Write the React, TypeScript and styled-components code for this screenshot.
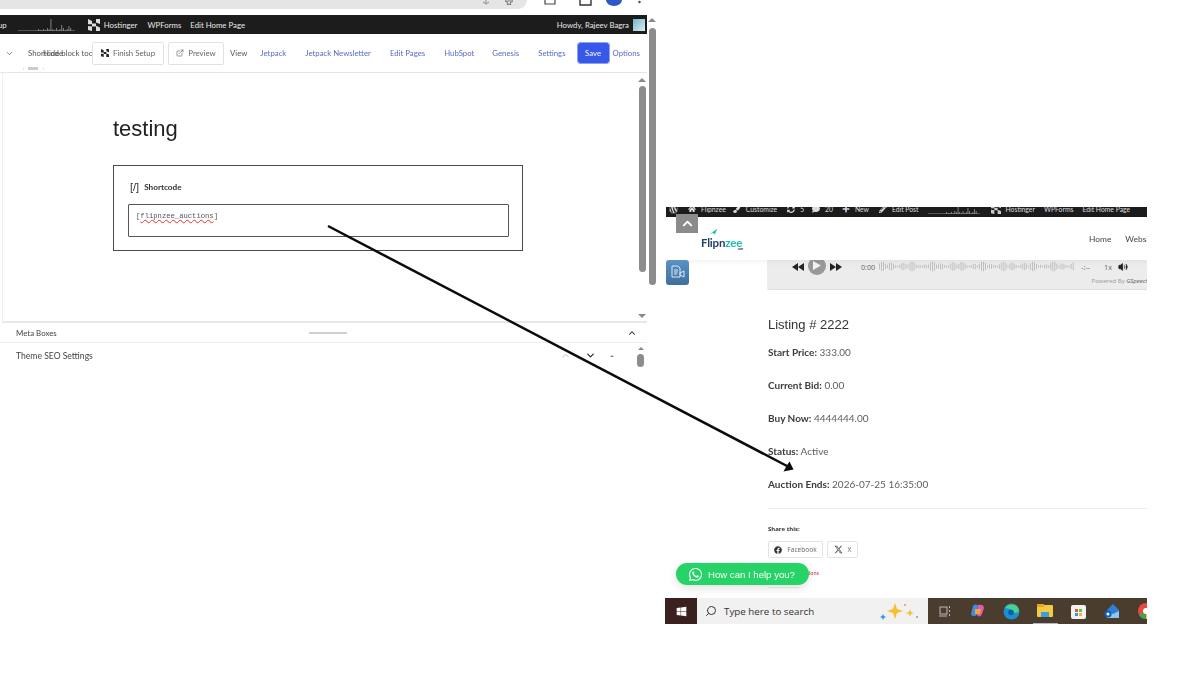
import React from "react";
import styled, { createGlobalStyle } from "styled-components";
import {
  FaWhatsapp,
  FaFacebook,
  FaWindows,
  FaWordpress,
  FaHome,
  FaPaintBrush,
  FaSyncAlt,
  FaComment,
  FaPlus,
  FaPencilAlt,
} from "react-icons/fa";
import { FaXTwitter } from "react-icons/fa6";
import { Search, ChevronDown, ChevronUp, ExternalLink, Volume2 } from "lucide-react";

const Global = createGlobalStyle`
  html, body { margin: 0; padding: 0; background: #fff; }
  body { font-family: "Open Sans", "Liberation Sans", sans-serif; }
  * { box-sizing: border-box; }
`;

const Canvas = styled.div`
  position: relative;
  width: 1200px;
  height: 675px;
  overflow: hidden;
  background: #fff;
`;

const EditorWindow = styled.div`
  position: absolute;
  left: 0;
  top: 0;
  width: 657px;
  height: 370px;
  overflow: hidden;
  display: grid;
  grid-template-columns: 647px 10px;
  filter: blur(0.35px);
`;

const EditorMain = styled.div`
  display: flex;
  flex-direction: column;
  min-width: 0;
`;

const BrowserBar = styled.div`
  height: 15px;
  display: flex;
  overflow: hidden;
`;

const AddressPill = styled.div`
  width: 527px;
  height: 9px;
  background: #e5e5e5;
  border-bottom-right-radius: 16px;
  flex: none;
  display: flex;
  justify-content: flex-end;
  gap: 15px;
  padding-right: 14px;
`;

const BrowserIcon = styled.span<{ $ml: number }>`
  margin-left: ${(p) => p.$ml}px;
  display: flex;
  align-items: flex-start;
  flex: none;
`;

const AdminBar = styled.div`
  height: 19px;
  background: #1c1c1c;
  color: #e8e8e8;
  display: flex;
  align-items: center;
  font: 400 7.8px "Lato", sans-serif;
  white-space: nowrap;
  overflow: hidden;
`;

const AdminCut = styled.span`
  margin-left: -2px;
`;

const AdminItem = styled.span<{ $ml: number }>`
  margin-left: ${(p) => p.$ml}px;
  display: inline-flex;
  align-items: center;
`;

const AdminSpacer = styled.span`
  flex: 1;
`;

const Avatar = styled.span`
  width: 12px;
  height: 12px;
  background: linear-gradient(135deg, #6fb6c9, #dfeef0);
  margin: 0 2px 0 4px;
`;

const Toolbar = styled.div`
  height: 39px;
  border-bottom: 1px solid #e6e6e6;
  display: flex;
  align-items: center;
  font: 400 7.8px "Lato", sans-serif;
  color: #555;
  white-space: nowrap;
  position: relative;
`;

const BlockSwitch = styled.div`
  width: 92px;
  flex: none;
  overflow: hidden;
  display: flex;
  align-items: center;
  gap: 14px;
  padding-left: 5px;
`;

const Overprint = styled.span`
  position: relative;
  display: inline-block;
`;

const OverText = styled.span`
  position: absolute;
  left: 15px;
  top: 0;
`;

const ToolButton = styled.div<{ $w: number; $ml: number }>`
  width: ${(p) => p.$w}px;
  margin-left: ${(p) => p.$ml}px;
  height: 23px;
  border: 1px solid #e2e2e2;
  border-radius: 2px;
  display: flex;
  align-items: center;
  justify-content: center;
  gap: 4px;
  color: #666;
  background: #fff;
  flex: none;
`;

const ToolLink = styled.span<{ $ml: number; $plain?: boolean }>`
  margin-left: ${(p) => p.$ml}px;
  color: ${(p) => (p.$plain ? "#555" : "#5a69c8")};
`;

const SaveButton = styled.div`
  width: 31px;
  height: 20px;
  margin-left: 12px;
  background: #3858e9;
  color: #fff;
  border: 1px solid #3858e9;
  outline: 1px solid #8ea2ee;
  border-radius: 2px;
  display: flex;
  align-items: center;
  justify-content: center;
  flex: none;
`;

const TinyScroll = styled.div`
  position: absolute;
  left: 23px;
  bottom: 1px;
  display: flex;
  align-items: center;
  gap: 4px;
  font-size: 5px;
  color: #aaa;
`;

const TinyThumb = styled.span`
  width: 10px;
  height: 3px;
  background: #ccc;
`;

const Stage = styled.div`
  height: 250px;
  display: grid;
  grid-template-columns: 1fr 10px;
  border-left: 1px solid #efefef;
  margin-left: 2px;
  border-bottom: 2px solid #e8e8e8;
`;

const StagePage = styled.div`
  padding: 42px 0 0 110px;
`;

const PageTitle = styled.h1`
  margin: 0 0 23px;
  font: 400 22px/27px "Liberation Sans", sans-serif;
  color: #222;
`;

const ShortcodeBlock = styled.div`
  width: 410px;
  height: 86px;
  border: 1px solid #4a4a4a;
  padding: 14px 14px 0;
`;

const BlockLabel = styled.div`
  display: flex;
  align-items: center;
  gap: 5px;
  font: 700 8.2px "Lato", sans-serif;
  color: #333;
  height: 13px;
  margin-bottom: 11px;
`;

const BlockGlyph = styled.span`
  font: 400 11px "Liberation Sans", sans-serif;
  padding-left: 2px;
`;

const ShortcodeInput = styled.div`
  width: 381px;
  height: 33px;
  border: 1px solid #555;
  border-radius: 1px;
  padding: 5px 7px;
  font: 7.2px/12px "Liberation Mono", monospace;
  color: #555;
`;

const Squiggle = styled.span`
  text-decoration: underline wavy #d33;
  text-decoration-thickness: 0.5px;
`;

const ScrollCol = styled.div<{ $top: number; $bottom: number; $gap: number }>`
  display: flex;
  flex-direction: column;
  align-items: center;
  padding: ${(p) => p.$top}px 0 ${(p) => p.$bottom}px;
  gap: ${(p) => p.$gap}px;
`;

const Thumb = styled.div<{ $h: number }>`
  width: 7px;
  height: ${(p) => p.$h}px;
  background: #8c8c8c;
  border-radius: 3.5px;
  flex: none;
`;

const Tri = styled.span<{ $down?: boolean; $s?: number }>`
  width: 0;
  height: 0;
  flex: none;
  border-left: ${(p) => p.$s ?? 4}px solid transparent;
  border-right: ${(p) => p.$s ?? 4}px solid transparent;
  ${(p) =>
    p.$down
      ? `border-top: ${p.$s ?? 4}px solid #8a8a8a;`
      : `border-bottom: ${p.$s ?? 4}px solid #8a8a8a;`}
`;

const StageSpring = styled.div`
  flex: 1;
`;

const MetaRow = styled.div<{ $h: number; $line?: boolean }>`
  height: ${(p) => p.$h}px;
  display: flex;
  align-items: center;
  font: 400 7.9px "Lato", sans-serif;
  color: #444;
  padding: 0 10px 0 16px;
  border-bottom: ${(p) => (p.$line ? "1px solid #eee" : "none")};
`;

const SettingsTitle = styled.span`
  font-size: 8.6px;
`;

const MetaHandle = styled.span`
  width: 38px;
  height: 2px;
  background: #cfcfcf;
  margin-left: 252px;
`;

const Push = styled.span`
  margin-left: auto;
  display: flex;
  align-items: center;
`;

const PushTight = styled(Push)`
  margin-right: -7px;
  gap: 14px;
`;

const MiniScroll = styled.span`
  display: flex;
  flex-direction: column;
  align-items: center;
  gap: 4px;
  margin: 3px 0 0 9px;
`;

const SiteWindow = styled.div`
  position: absolute;
  left: 665px;
  top: 207px;
  width: 482px;
  height: 417px;
  overflow: hidden;
  display: flex;
  flex-direction: column;
  filter: blur(0.35px);
`;

const SiteAdmin = styled.div`
  height: 10px;
  margin-left: 1px;
  background: #1c1c1c;
  color: #ddd;
  display: flex;
  align-items: flex-end;
  overflow: hidden;
  font: 400 6.8px/10px "Lato", sans-serif;
  white-space: nowrap;
  flex: none;
  padding-left: 3px;
  padding-bottom: 3px;
`;

const SiteAdminItem = styled.span<{ $ml: number }>`
  margin-left: ${(p) => p.$ml}px;
  display: inline-flex;
  align-items: center;
  gap: 5px;
  flex: none;
`;

const SiteHeader = styled.div`
  height: 43px;
  flex: none;
  display: flex;
  align-items: center;
  justify-content: space-between;
  padding-left: 36px;
  box-shadow: 0 2px 5px rgba(0, 0, 0, 0.05);
  position: relative;
  z-index: 1;
`;

const Logo = styled.div`
  position: relative;
  width: 42px;
  padding-top: 11px;
  font: 700 11.5px/10px "Lato", sans-serif;
  letter-spacing: -0.2px;
  color: #26406b;
`;

const LogoMark = styled.svg`
  position: absolute;
  left: 8px;
  top: 1px;
`;

const LogoAccent = styled.span`
  color: #1fbfae;
`;

const LogoSub = styled.div`
  font-size: 3px;
  line-height: 3px;
  text-align: right;
  color: #26406b;
`;

const SiteNav = styled.nav`
  display: flex;
  gap: 14px;
  font: 400 8.4px "Lato", sans-serif;
  color: #444;
  width: 58px;
  overflow: hidden;
`;

const Player = styled.div`
  height: 30px;
  margin-left: 102px;
  background: #ececec;
  border-radius: 0 0 0 3px;
  border-bottom: 1px solid #ddd;
  flex: none;
  padding: 0 0 0 25px;
  display: flex;
  flex-direction: column;
  overflow: hidden;
`;

const PlayerRow = styled.div`
  height: 13px;
  display: flex;
  align-items: center;
  gap: 3px;
  font-size: 7.2px;
  color: #666;
  flex: none;
  white-space: nowrap;
`;

const PlayBtn = styled.span`
  width: 18px;
  height: 18px;
  border-radius: 50%;
  background: #999;
  display: inline-flex;
  align-items: center;
  justify-content: center;
  margin: -2px 1px 0;
`;

const PlayerTime = styled.span`
  margin: 0 1px 0 16px;
`;

const Rate = styled.span<{ $ml: number }>`
  margin-left: ${(p) => p.$ml}px;
`;

const SpeakerWrap = styled.span`
  margin-left: 3px;
  display: inline-flex;
`;

const Powered = styled.div`
  font-size: 6px;
  color: #999;
  text-align: right;
  margin-top: 4px;
  margin-right: -2px;
  white-space: nowrap;
`;

const PoweredName = styled.span`
  font-style: italic;
  color: #555;
`;

const Article = styled.div`
  padding: 27px 0 0 103px;
  color: #5e5e5e;
  font: 400 10px/14px "Lato", sans-serif;
`;

const Listing = styled.h2`
  margin: 0 0 12px;
  font: 400 13px/16px "Liberation Sans", sans-serif;
  color: #333;
`;

const Field = styled.p`
  margin: 0 0 19px;
  height: 14px;
  white-space: nowrap;
`;

const FieldName = styled.strong`
  font-weight: 700;
  color: #3c3c3c;
`;

const Rule = styled.div`
  height: 1px;
  background: #eee;
  margin-top: -2px;
`;

const ShareTitle = styled.div`
  margin-top: 15px;
  font: 700 6px/10px "Open Sans", sans-serif;
  color: #333;
`;

const ShareRow = styled.div`
  display: flex;
  gap: 4px;
  margin-top: 7px;
`;

const ShareBtn = styled.div<{ $w: number }>`
  width: ${(p) => p.$w}px;
  height: 17px;
  border: 1px solid #e4e4e4;
  border-radius: 2px;
  display: flex;
  align-items: center;
  justify-content: center;
  gap: 5px;
  font: 400 6.6px "Open Sans", sans-serif;
  color: #666;
`;

const Related = styled.div`
  margin: 11px 0 0 41px;
  font-size: 5.5px;
  line-height: 9px;
  color: #c0392b;
`;

const Rule2 = styled.div`
  width: 32px;
  height: 1px;
  background: #eee;
  margin-top: 9px;
`;

const Spacer = styled.div`
  flex: 1;
`;

const Taskbar = styled.div`
  height: 26px;
  display: flex;
  flex: none;
  background: #4a3d2e;
`;

const StartBox = styled.div`
  width: 32px;
  background: #3a211d;
  display: flex;
  align-items: center;
  justify-content: center;
  color: #fff;
`;

const SearchBox = styled.div`
  width: 231px;
  background: #f1f1f1;
  display: flex;
  align-items: center;
  gap: 7px;
  padding: 0 8px;
  font: 400 9.8px "Open Sans", sans-serif;
  color: #333;
`;

const SearchGlass = styled(Search)`
  transform: scaleX(-1);
`;

const Sparkles = styled.svg`
  margin-left: auto;
`;

const TrayIcons = styled.div`
  flex: 1;
  display: flex;
  overflow: hidden;
`;

const TrayCell = styled.span<{ $active?: boolean }>`
  flex: 0 0 33.5px;
  display: flex;
  align-items: center;
  justify-content: center;
  position: relative;
  ${(p) =>
    p.$active
      ? `&::after { content: ""; position: absolute; left: 4px; right: 4px; bottom: 0; height: 1.5px; background: #a9bcc9; }`
      : ""}
`;

const UpTab = styled.div`
  position: absolute;
  left: 11px;
  top: 7px;
  width: 22px;
  height: 19px;
  background: #8b8b8b;
  color: #fff;
  display: flex;
  align-items: center;
  justify-content: center;
  z-index: 2;
`;

const DocBadge = styled.div`
  position: absolute;
  left: 1px;
  top: 53px;
  width: 23px;
  height: 25px;
  background: linear-gradient(#5a93c6, #3d6f9c);
  border-radius: 3px;
  display: flex;
  align-items: center;
  justify-content: center;
  z-index: 2;
`;

const WhatsappPill = styled.div`
  position: absolute;
  left: 11px;
  top: 356px;
  width: 133px;
  height: 22px;
  border-radius: 11px;
  background: #25d366;
  color: #fff;
  display: flex;
  align-items: center;
  gap: 5px;
  padding-left: 12px;
  font: 400 9.6px "Liberation Sans", sans-serif;
  box-shadow: 0 3px 8px rgba(0, 0, 0, 0.12);
  z-index: 3;
  white-space: nowrap;
`;

const ArrowLayer = styled.svg`
  position: absolute;
  left: 0;
  top: 0;
  pointer-events: none;
  z-index: 5;
`;

const Sparkline = ({ w, dark }: { w: number; dark?: boolean }) => {
  const bars = [2, 1, 1, 2, 1, 3, 2, 12, 2, 1, 3, 1, 2, 6, 3, 1, 2, 5, 3];
  return (
    <svg width={w} height="12" viewBox={`0 0 ${w} 12`}>
      <line x1="0" y1="11.5" x2={w} y2="11.5" stroke="#777" strokeWidth="0.6" />
      {bars.map((b, i) => (
        <rect
          key={i}
          x={w * 0.35 + (i * w * 0.6) / bars.length}
          y={12 - b}
          width="0.8"
          height={b}
          fill={dark ? "#bbb" : "#999"}
        />
      ))}
    </svg>
  );
};

const HostingerIcon = ({ size, color }: { size: number; color: string }) => (
  <svg width={size} height={size} viewBox="0 0 12 12" fill={color}>
    <path d="M0 0l4 2v3.2H0zM8 0l4-1v6l-4-1.6zM0 7l4 .4V12l-4-1zM8 6.8l4 1.6V12l-4 .6zM4 4.4h4v3H4z" />
  </svg>
);

const Wave = () => {
  const bars = Array.from({ length: 96 }, (_, i) => 2 + Math.abs(Math.sin(i * 0.9) * 4 + Math.cos(i * 0.37) * 4));
  return (
    <svg width="196" height="11" viewBox="0 0 196 11">
      {bars.map((b, i) => (
        <rect key={i} x={i * 2.04} y={5.5 - b / 2} width="0.8" height={b} fill="#b5b5b5" />
      ))}
    </svg>
  );
};

const CopilotIcon = () => (
  <svg width="16" height="16" viewBox="0 0 16 16">
    <path d="M3 3c2-2 5-2 5 1l-1 7c-1 3-5 3-6 0z" fill="#3f8be0" />
    <path d="M8 2c3-1 6 0 6 3l-2 6c-1 3-4 3-5 1z" fill="#e25aa8" />
    <path d="M5 6h6l-1 5H5z" fill="#f2a33a" />
  </svg>
);

const EdgeIcon = () => (
  <svg width="17" height="17" viewBox="0 0 16 16">
    <circle cx="8" cy="8" r="7.5" fill="#1a8fd1" />
    <path d="M2 5c2-5 12-5 13 2 0 2-3 3-5 2 1-3-6-4-8-4z" fill="#4fd08a" />
    <circle cx="7.5" cy="9" r="2.6" fill="#0a5fa8" />
  </svg>
);

const FilesIcon = () => (
  <svg width="16" height="14" viewBox="0 0 16 14">
    <rect x="0" y="1" width="16" height="12" rx="1" fill="#f6c945" />
    <rect x="0" y="0" width="7" height="3" fill="#e2a91f" />
    <rect x="4" y="8" width="8" height="5" fill="#3aa1e0" />
  </svg>
);

const StoreIcon = () => (
  <svg width="15" height="16" viewBox="0 0 15 16">
    <rect y="2" width="15" height="14" rx="2" fill="#f2f2f2" />
    <rect x="4" y="6" width="3" height="3" fill="#e4572e" />
    <rect x="8" y="6" width="3" height="3" fill="#6cbf3f" />
    <rect x="4" y="10" width="3" height="3" fill="#2e9be4" />
    <rect x="8" y="10" width="3" height="3" fill="#f2b632" />
  </svg>
);

const MailIcon = () => (
  <svg width="16" height="15" viewBox="0 0 16 15">
    <path d="M3 6l6-6 6 6v8H3z" fill="#2f7fd8" />
    <path d="M3 7l6 3 6-3v7H3z" fill="#8cc8f2" />
    <circle cx="4" cy="10" r="3.6" fill="#0f5fb5" />
    <circle cx="4" cy="10" r="1.5" fill="#fff" />
  </svg>
);

const ChromeIcon = () => (
  <svg width="16" height="16" viewBox="0 0 16 16">
    <circle cx="8" cy="8" r="8" fill="#e64a3a" />
    <path d="M8 8L1 12a8 8 0 0 0 7 4z" fill="#3aa757" />
    <path d="M8 8l7 4a8 8 0 0 1-7 4z" fill="#f6c52c" />
    <circle cx="8" cy="8" r="3" fill="#fff" />
  </svg>
);

const TaskViewIcon = () => (
  <svg width="12" height="12" viewBox="0 0 12 12" fill="none" stroke="#b9b9b9" strokeWidth="1">
    <rect x="1" y="2" width="7" height="7" />
    <path d="M10.5 1v2M10.5 5v2M10.5 9v2M0 11h8" />
  </svg>
);

const topLinks: [string, number][] = [
  ["Jetpack", 13],
  ["Jetpack Newsletter", 19],
  ["Edit Pages", 19],
  ["HubSpot", 19],
  ["Genesis", 18],
  ["Settings", 19],
];

const fields: [string, string][] = [
  ["Start Price:", "333.00"],
  ["Current Bid:", "0.00"],
  ["Buy Now:", "4444444.00"],
  ["Status:", "Active"],
  ["Auction Ends:", "2026-07-25 16:35:00"],
];

export default function App() {
  return (
    <Canvas>
      <Global />
      <EditorWindow>
        <EditorMain>
          <BrowserBar>
            <AddressPill>
              <svg width="8" height="5" viewBox="0 0 8 5" fill="none" stroke="#888">
                <path d="M4 0v3M1 2l3 2 3-2" />
              </svg>
              <svg width="8" height="5" viewBox="0 0 8 5" fill="none" stroke="#777">
                <path d="M0 1h8L5 3l1 2-2-1-2 1 1-2z" />
              </svg>
            </AddressPill>
            <BrowserIcon $ml={17}>
              <svg width="12" height="6" viewBox="0 0 12 6" fill="none" stroke="#444" strokeWidth="1.2">
                <path d="M1 0v4h10V0" />
              </svg>
            </BrowserIcon>
            <BrowserIcon $ml={23}>
              <svg width="13" height="6" viewBox="0 0 13 6" fill="none" stroke="#333" strokeWidth="1.4">
                <path d="M1 0v5h11V0" />
              </svg>
            </BrowserIcon>
            <BrowserIcon $ml={14}>
              <svg width="16" height="6" viewBox="0 0 16 6">
                <path d="M0 0h16a8 6 0 0 1-16 0z" fill="#2c56c9" />
              </svg>
            </BrowserIcon>
            <BrowserIcon $ml={16}>
              <svg width="3" height="4" viewBox="0 0 3 4">
                <circle cx="1.5" cy="2" r="1.2" fill="#444" />
              </svg>
            </BrowserIcon>
          </BrowserBar>
          <AdminBar>
            <AdminCut>up</AdminCut>
            <AdminItem $ml={11}>
              <Sparkline w={57} />
            </AdminItem>
            <AdminItem $ml={13}>
              <HostingerIcon size={12} color="#ddd" />
            </AdminItem>
            <AdminItem $ml={4}>Hostinger</AdminItem>
            <AdminItem $ml={10}>WPForms</AdminItem>
            <AdminItem $ml={9}>Edit Home Page</AdminItem>
            <AdminSpacer />
            <span>Howdy, Rajeev Bagra</span>
            <Avatar />
          </AdminBar>
          <Toolbar>
            <BlockSwitch>
              <ChevronDown size={9} color="#666" />
              <Overprint>
                Shortcode
                <OverText>Hide block tools</OverText>
              </Overprint>
            </BlockSwitch>
            <ToolButton $w={72} $ml={0}>
              <HostingerIcon size={8} color="#222" />
              Finish Setup
            </ToolButton>
            <ToolButton $w={56} $ml={4}>
              <ExternalLink size={8} />
              Preview
            </ToolButton>
            <ToolLink $ml={6} $plain>
              View
            </ToolLink>
            {topLinks.map(([label, gap]) => (
              <ToolLink key={label} $ml={gap}>
                {label}
              </ToolLink>
            ))}
            <SaveButton>Save</SaveButton>
            <ToolLink $ml={4}>Options</ToolLink>
            <TinyScroll>
              ‹ <TinyThumb /> ›
            </TinyScroll>
          </Toolbar>
          <Stage>
            <StagePage>
              <PageTitle>testing</PageTitle>
              <ShortcodeBlock>
                <BlockLabel>
                  <BlockGlyph>[/]</BlockGlyph> Shortcode
                </BlockLabel>
                <ShortcodeInput>
                  [<Squiggle>flipnzee_auctions</Squiggle>]
                </ShortcodeInput>
              </ShortcodeBlock>
            </StagePage>
            <ScrollCol $top={5} $bottom={3} $gap={4}>
              <Tri />
              <Thumb $h={186} />
              <StageSpring />
              <Tri $down />
            </ScrollCol>
          </Stage>
          <MetaRow $h={20} $line>
            Meta Boxes
            <MetaHandle />
            <Push>
              <ChevronUp size={10} strokeWidth={2.5} color="#222" />
            </Push>
          </MetaRow>
          <MetaRow $h={25}>
            <SettingsTitle>Theme SEO Settings</SettingsTitle>
            <PushTight>
              <ChevronUp size={11} strokeWidth={2} color="#bbb" />
              <ChevronDown size={11} strokeWidth={2.5} color="#222" />
              <Tri $s={2} />
              <MiniScroll>
                <Tri $s={3} />
                <Thumb $h={13} />
              </MiniScroll>
            </PushTight>
          </MetaRow>
        </EditorMain>
        <ScrollCol $top={18} $bottom={0} $gap={6}>
          <Tri />
          <Thumb $h={257} />
        </ScrollCol>
      </EditorWindow>

      <SiteWindow>
        <SiteAdmin>
          <SiteAdminItem $ml={0}>
            <FaWordpress size={9} />
          </SiteAdminItem>
          <SiteAdminItem $ml={10}>
            <FaHome size={8} />
            Flipnzee
          </SiteAdminItem>
          <SiteAdminItem $ml={7}>
            <FaPaintBrush size={8} />
            Customize
          </SiteAdminItem>
          <SiteAdminItem $ml={10}>
            <FaSyncAlt size={8} />5
          </SiteAdminItem>
          <SiteAdminItem $ml={8}>
            <FaComment size={8} />
            20
          </SiteAdminItem>
          <SiteAdminItem $ml={9}>
            <FaPlus size={8} />
            New
          </SiteAdminItem>
          <SiteAdminItem $ml={10}>
            <FaPencilAlt size={8} />
            Edit Post
          </SiteAdminItem>
          <SiteAdminItem $ml={9}>
            <Sparkline w={52} />
          </SiteAdminItem>
          <SiteAdminItem $ml={11}>
            <HostingerIcon size={10} color="#ccc" />
            Hostinger
          </SiteAdminItem>
          <SiteAdminItem $ml={9}>WPForms</SiteAdminItem>
          <SiteAdminItem $ml={9}>Edit Home Page</SiteAdminItem>
        </SiteAdmin>
        <SiteHeader>
          <Logo>
            <LogoMark width="9" height="8" viewBox="0 0 14 10">
              <path d="M0 9L13 0 9 9 6 6z" fill="#1fbfae" />
            </LogoMark>
            Flipn<LogoAccent>zee</LogoAccent>
            <LogoSub>.com</LogoSub>
          </Logo>
          <SiteNav>
            <span>Home</span>
            <span>Websites</span>
          </SiteNav>
        </SiteHeader>
        <Player>
          <PlayerRow>
            <svg width="12" height="8" viewBox="0 0 12 8" fill="#222">
              <path d="M6 0v8L0 4zM12 0v8L6 4z" />
            </svg>
            <PlayBtn>
              <svg width="8" height="9" viewBox="0 0 8 9" fill="#f2f2f2">
                <path d="M0 0l8 4.5L0 9z" />
              </svg>
            </PlayBtn>
            <svg width="12" height="8" viewBox="0 0 12 8" fill="#222">
              <path d="M0 0v8l6-4zM6 0v8l6-4z" />
            </svg>
            <PlayerTime>0:00</PlayerTime>
            <Wave />
            <Rate $ml={3}>-:--</Rate>
            <Rate $ml={11}>1x</Rate>
            <SpeakerWrap>
              <Volume2 size={10} fill="#222" color="#222" />
            </SpeakerWrap>
          </PlayerRow>
          <Powered>
            Powered By <PoweredName>GSpeech</PoweredName>
          </Powered>
        </Player>
        <Article>
          <Listing>Listing # 2222</Listing>
          {fields.map(([name, value]) => (
            <Field key={name}>
              <FieldName>{name}</FieldName> {value}
            </Field>
          ))}
          <Rule />
          <ShareTitle>Share this:</ShareTitle>
          <ShareRow>
            <ShareBtn $w={55}>
              <FaFacebook size={8} color="#333" />
              Facebook
            </ShareBtn>
            <ShareBtn $w={31}>
              <FaXTwitter size={9} color="#555" />X
            </ShareBtn>
          </ShareRow>
          <Related>ions</Related>
          <Rule2 />
        </Article>
        <Spacer />
        <Taskbar>
          <StartBox>
            <FaWindows size={11} />
          </StartBox>
          <SearchBox>
            <SearchGlass size={12} color="#333" />
            Type here to search
            <Sparkles width="40" height="20" viewBox="0 0 40 20">
              <path d="M15 2l2 6 6 2-6 2-2 6-2-6-6-2 6-2z" fill="#f6c02c" />
              <path d="M30 8l1 3 3 1-3 1-1 3-1-3-3-1 3-1z" fill="#f6c02c" />
              <path d="M3 13l1 2 2 1-2 1-1 2-1-2-2-1 2-1z" fill="#2f9be0" />
              <circle cx="25" cy="4" r="1" fill="#e2a02c" />
              <circle cx="37" cy="16" r="1" fill="#999" />
            </Sparkles>
          </SearchBox>
          <TrayIcons>
            <TrayCell>
              <TaskViewIcon />
            </TrayCell>
            <TrayCell>
              <CopilotIcon />
            </TrayCell>
            <TrayCell>
              <EdgeIcon />
            </TrayCell>
            <TrayCell $active>
              <FilesIcon />
            </TrayCell>
            <TrayCell>
              <StoreIcon />
            </TrayCell>
            <TrayCell>
              <MailIcon />
            </TrayCell>
            <TrayCell>
              <ChromeIcon />
            </TrayCell>
          </TrayIcons>
        </Taskbar>
        <UpTab>
          <ChevronUp size={15} strokeWidth={3} />
        </UpTab>
        <DocBadge>
          <svg width="15" height="15" viewBox="0 0 15 15" fill="none" stroke="#dbe9f5" strokeWidth="1">
            <path d="M2 1h6l2 2v9H2zM4 5h4M4 7h4M4 9h3M10 8l4-2v6l-4-2z" />
          </svg>
        </DocBadge>
        <WhatsappPill>
          <FaWhatsapp size={15} />
          How can I help you?
        </WhatsappPill>
      </SiteWindow>

      <ArrowLayer width="1200" height="675" viewBox="0 0 1200 675">
        <line x1="328" y1="226" x2="787" y2="466" stroke="#0b0b0b" strokeWidth="2.5" />
        <path d="M793.5 469.5L783.5 471.5L786.5 466L789.5 461.5z" fill="#0b0b0b" />
      </ArrowLayer>
    </Canvas>
  );
}
